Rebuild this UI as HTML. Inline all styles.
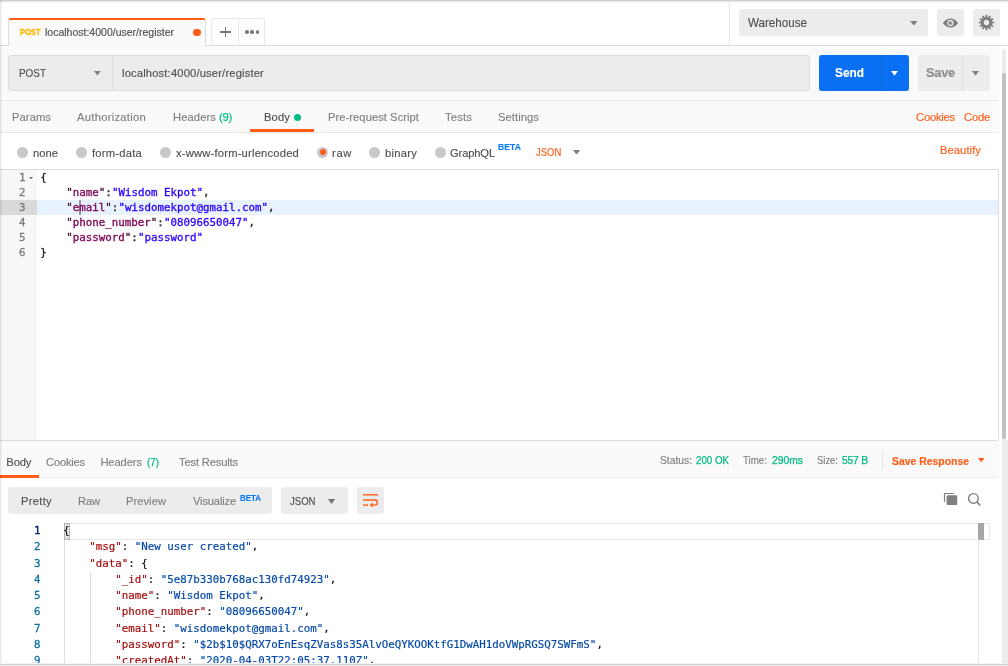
<!DOCTYPE html>
<html lang="en"><head><meta charset="utf-8"><title>Postman</title>
<style>
html,body{margin:0;padding:0;}
body{width:1008px;height:666px;position:relative;overflow:hidden;background:#fff;font-family:"Liberation Sans",sans-serif;}
#app{position:absolute;left:0;top:0;width:1008px;height:666px;will-change:transform;}
#app div,#app svg{position:absolute;box-sizing:border-box;}
.t{position:absolute;white-space:pre;line-height:20px;height:20px;-webkit-text-stroke:0.15px currentColor;}
.code{position:absolute;white-space:pre;font-family:"DejaVu Sans Mono","Liberation Mono",monospace;-webkit-text-stroke:0.3px currentColor;}
</style></head>
<body><div id="app">
<div style="left:0px;top:0px;width:1008px;height:45px;background:#fff;"></div>
<div style="left:0px;top:45px;width:1008px;height:1px;background:#dddddd;"></div>
<div style="left:0px;top:46px;width:999px;height:395px;background:#fafafa;"></div>
<div style="left:729px;top:0px;width:1px;height:45px;background:#e6e6e6;"></div>
<div style="left:8px;top:18px;width:198px;height:28px;background:#fafafa;border:1px solid #dddddd;border-top:2px solid #ff5c16;border-bottom:none;border-radius:3px 3px 0 0;"></div>
<div style="left:193px;top:28.8px;width:8.1px;height:7.3px;background:#ff5c16;border-radius:3.4px;"></div>
<div style="left:211px;top:18px;width:54px;height:27px;background:#fff;border:1px solid #e9e9e9;border-bottom:none;border-radius:3px 3px 0 0;"></div>
<div style="left:238px;top:19px;width:1px;height:26px;background:#e9e9e9;"></div>
<div style="left:220px;top:31.2px;width:10.8px;height:1.5px;background:#777;"></div>
<div style="left:224.7px;top:26.8px;width:1.5px;height:10.3px;background:#777;"></div>
<div style="left:245px;top:30.2px;width:3.6px;height:3.6px;background:#777;border-radius:50%;"></div>
<div style="left:250.3px;top:30.2px;width:3.6px;height:3.6px;background:#777;border-radius:50%;"></div>
<div style="left:255.6px;top:30.2px;width:3.6px;height:3.6px;background:#777;border-radius:50%;"></div>
<div style="left:739px;top:9px;width:189px;height:27px;background:#ececec;border-radius:3px;"></div>
<svg style="left:909.8px;top:20.75px" width="7.6" height="4.7" viewBox="0 0 7.6 4.7"><path d="M0 0h7.6L3.8 4.7z" fill="#808080"/></svg>
<div style="left:937px;top:9px;width:27px;height:27px;background:#ececec;border-radius:3px;"></div>
<div style="left:973px;top:9px;width:27px;height:27px;background:#ececec;border-radius:3px;"></div>
<svg style="left:942px;top:16px" width="17" height="13" viewBox="-8.500 -6.900 17 13"><path d="M-7.700 0C-5.200 -3.300 -2.700 -4.500 0 -4.500S5.200 -3.300 7.700 0C5.200 3.300 2.700 4.500 0 4.500S-5.200 3.300 -7.700 0z" fill="#7d7d7d"/><circle cx="-0.100" cy="0" r="3.100" fill="#ececec"/><circle cx="-0.100" cy="0" r="1.900" fill="#7d7d7d"/><path d="M0.100 -1.700v1.500h1.500a1.600 1.600 0 0 0 -1.500 -1.500z" fill="#e0e0e0"/></svg>
<svg style="left:977.900px;top:13.900px" width="17" height="17" viewBox="-8.500 -8.500 17 17"><path d="M-1.05 -5.19L-0.81 -7.66L0.81 -7.66L1.05 -5.19L1.69 -5.02L3.13 -7.04L4.53 -6.23L3.51 -3.97L3.97 -3.51L6.23 -4.53L7.04 -3.13L5.02 -1.69L5.19 -1.05L7.66 -0.81L7.66 0.81L5.19 1.05L5.02 1.69L7.04 3.13L6.23 4.53L3.97 3.51L3.51 3.97L4.53 6.23L3.13 7.04L1.69 5.02L1.05 5.19L0.81 7.66L-0.81 7.66L-1.05 5.19L-1.69 5.02L-3.13 7.04L-4.53 6.23L-3.51 3.97L-3.97 3.51L-6.23 4.53L-7.04 3.13L-5.02 1.69L-5.19 1.05L-7.66 0.81L-7.66 -0.81L-5.19 -1.05L-5.02 -1.69L-7.04 -3.13L-6.23 -4.53L-3.97 -3.51L-3.51 -3.97L-4.53 -6.23L-3.13 -7.04L-1.69 -5.02z" fill="#7d7d7d"/><circle r="5.500" fill="#7d7d7d"/><circle r="2.700" fill="#ececec"/></svg>
<div style="left:8px;top:55px;width:802px;height:36px;background:#ececec;border:1px solid #dcdcdc;border-radius:3px;"></div>
<div style="left:112px;top:56px;width:1px;height:34px;background:#dcdcdc;"></div>
<svg style="left:94.3px;top:71.1px" width="6.8" height="4.6" viewBox="0 0 6.8 4.6"><path d="M0 0h6.8L3.4 4.6z" fill="#808080"/></svg>
<div style="left:819px;top:55px;width:90px;height:36px;background:#0a70f3;border-radius:3px;"></div>
<div style="left:881px;top:55px;width:1px;height:36px;background:#0a62d4;"></div>
<svg style="left:891.1px;top:71.15px" width="7" height="4.7" viewBox="0 0 7 4.7"><path d="M0 0h7L3.5 4.7z" fill="#ffffff"/></svg>
<div style="left:918px;top:55px;width:72px;height:36px;background:#ededed;border-radius:3px;"></div>
<div style="left:962px;top:55px;width:1px;height:36px;background:#e0e0e0;"></div>
<svg style="left:972px;top:71.15px" width="7" height="4.7" viewBox="0 0 7 4.7"><path d="M0 0h7L3.5 4.7z" fill="#808080"/></svg>
<div style="left:0px;top:100px;width:999px;height:1px;background:#eaeaea;"></div>
<div style="left:0px;top:132px;width:999px;height:1px;background:#eaeaea;"></div>
<div style="left:293.5px;top:113.5px;width:7px;height:7px;background:#00bc86;border-radius:50%;"></div>
<div style="left:250px;top:129px;width:64px;height:3px;background:#ff5c16;"></div>
<div style="left:0px;top:133px;width:999px;height:36px;background:#fff;"></div>
<div style="left:16.5px;top:146.5px;width:11px;height:11px;background:#c8c8c8;border-radius:50%;"></div>
<div style="left:75.5px;top:146.5px;width:11px;height:11px;background:#c8c8c8;border-radius:50%;"></div>
<div style="left:159.5px;top:146.5px;width:11px;height:11px;background:#c8c8c8;border-radius:50%;"></div>
<div style="left:317.2px;top:146.5px;width:11px;height:11px;background:#c8c8c8;border-radius:50%;"></div>
<div style="left:319.7px;top:149px;width:6px;height:6px;background:#ff5c16;border-radius:50%;"></div>
<div style="left:368.5px;top:146.5px;width:11px;height:11px;background:#c8c8c8;border-radius:50%;"></div>
<div style="left:434.5px;top:146.5px;width:11px;height:11px;background:#c8c8c8;border-radius:50%;"></div>
<svg style="left:573.4px;top:149.5px" width="7.2" height="4.8" viewBox="0 0 7.2 4.8"><path d="M0 0h7.2L3.6 4.8z" fill="#808080"/></svg>
<div style="left:-2px;top:169px;width:1001px;height:272px;background:#fff;border:1px solid #dcdcdc;border-radius:2px;"></div>
<div style="left:0px;top:170px;width:37px;height:270px;background:#f7f7f7;"></div>
<div style="left:0px;top:200px;width:37px;height:15px;background:#dadada;"></div>
<div style="left:37px;top:200px;width:961px;height:15px;background:#e8f2ff;"></div>
<div style="left:79px;top:200px;width:2px;height:15px;background:#9a9a9a;"></div>
<span class="code" style="left:40.300px;top:170px;font-size:10.8px;line-height:15px;color:#222">{</span>
<span class="code" style="left:2px;width:23.500px;text-align:right;top:170px;font-size:10.8px;line-height:15px;color:#7a7a7a">1</span>
<span class="code" style="left:40.300px;top:185px;font-size:10.8px;line-height:15px;color:#222">    <span style="color:#3d1230">&quot;</span><span style="color:#7f0055">name</span><span style="color:#3d1230">&quot;</span>:<span style="color:#2a00ff">&quot;Wisdom Ekpot&quot;</span>,</span>
<span class="code" style="left:2px;width:23.500px;text-align:right;top:185px;font-size:10.8px;line-height:15px;color:#7a7a7a">2</span>
<span class="code" style="left:40.300px;top:200px;font-size:10.8px;line-height:15px;color:#222">    <span style="color:#3d1230">&quot;</span><span style="color:#7f0055">email</span><span style="color:#3d1230">&quot;</span>:<span style="color:#2a00ff">&quot;wisdomekpot@gmail.com&quot;</span>,</span>
<span class="code" style="left:2px;width:23.500px;text-align:right;top:200px;font-size:10.8px;line-height:15px;color:#7a7a7a">3</span>
<span class="code" style="left:40.300px;top:215px;font-size:10.8px;line-height:15px;color:#222">    <span style="color:#3d1230">&quot;</span><span style="color:#7f0055">phone_number</span><span style="color:#3d1230">&quot;</span>:<span style="color:#2a00ff">&quot;08096650047&quot;</span>,</span>
<span class="code" style="left:2px;width:23.500px;text-align:right;top:215px;font-size:10.8px;line-height:15px;color:#7a7a7a">4</span>
<span class="code" style="left:40.300px;top:230px;font-size:10.8px;line-height:15px;color:#222">    <span style="color:#3d1230">&quot;</span><span style="color:#7f0055">password</span><span style="color:#3d1230">&quot;</span>:<span style="color:#2a00ff">&quot;password&quot;</span></span>
<span class="code" style="left:2px;width:23.500px;text-align:right;top:230px;font-size:10.8px;line-height:15px;color:#7a7a7a">5</span>
<span class="code" style="left:40.300px;top:245px;font-size:10.8px;line-height:15px;color:#222">}</span>
<span class="code" style="left:2px;width:23.500px;text-align:right;top:245px;font-size:10.8px;line-height:15px;color:#7a7a7a">6</span>
<svg style="left:29.4px;top:176.6px" width="4" height="2.6" viewBox="0 0 4 2.6"><path d="M0 0h4L2 2.6z" fill="#777777"/></svg>
<div style="left:0px;top:441px;width:999px;height:36px;background:#fafafa;"></div>
<div style="left:0px;top:477px;width:999px;height:1px;background:#ececec;"></div>
<div style="left:0px;top:475px;width:39px;height:3px;background:#ff5c16;"></div>
<div style="left:882px;top:451px;width:1px;height:18px;background:#e4e4e4;"></div>
<svg style="left:977.7px;top:458.2px" width="6.6" height="4.2" viewBox="0 0 6.6 4.2"><path d="M0 0h6.6L3.3 4.2z" fill="#ff5c16"/></svg>
<div style="left:8px;top:487px;width:264px;height:27px;background:#ececec;border-radius:3px;"></div>
<div style="left:281px;top:487px;width:67px;height:27px;background:#ececec;border-radius:3px;"></div>
<svg style="left:328px;top:499.05px" width="7.2" height="4.9" viewBox="0 0 7.2 4.9"><path d="M0 0h7.2L3.6 4.9z" fill="#757575"/></svg>
<div style="left:357px;top:487px;width:27px;height:27px;background:#ececec;border-radius:3px;"></div>
<svg style="left:361px;top:492px" width="19" height="17" viewBox="0 0 19 17"><g fill="none" stroke="#ff5c16" stroke-width="1.400" stroke-linecap="butt" stroke-linejoin="round"><path d="M2 2.800h15"/><path d="M2 8h11.800a2.550 2.550 0 0 1 0 5.100H10.500"/><path d="M2 13.100h5"/></g><path d="M11.600 10.600l-3 2.500 3 2.500z" fill="#ff5c16"/></svg>
<svg style="left:943px;top:492px" width="16" height="14" viewBox="0 0 16 14"><path d="M1.500 10V1.500H11" fill="none" stroke="#808080" stroke-width="1.200"/><rect x="3.600" y="3.200" width="10.600" height="9.800" rx="1" fill="#808080"/></svg>
<svg style="left:966px;top:491px" width="16" height="16" viewBox="0 0 16 16"><circle cx="7.400" cy="7.400" r="4.800" fill="none" stroke="#808080" stroke-width="1.400"/><path d="M10.900 10.900l3 3.100" stroke="#808080" stroke-width="1.600" stroke-linecap="round"/></svg>
<div style="left:64px;top:523px;width:926px;height:16.5px;background:#fff;border:1px solid #e8e8e8;"></div>
<div style="left:977.5px;top:523px;width:6px;height:16.5px;background:#a6a6a6;"></div>
<div style="left:977.5px;top:539px;width:1px;height:127px;background:#e4e4e4;"></div>
<div style="left:64px;top:539.5px;width:1px;height:127px;background:#dedede;"></div>
<div style="left:90px;top:572px;width:1px;height:95px;background:#dedede;"></div>
<div style="left:64px;top:523px;width:5.8px;height:16.5px;background:#e4e4e4;border:1px solid #b4b4b4;"></div>
<span class="code" style="left:63.300px;top:523px;font-size:10.8px;line-height:16.25px;color:#111;-webkit-text-stroke-width:0.18px">{</span>
<span class="code" style="left:10px;width:30.500px;text-align:right;top:523px;font-size:10.8px;line-height:16.25px;color:#0b216f">1</span>
<span class="code" style="left:63.300px;top:539.25px;font-size:10.8px;line-height:16.25px;color:#111;-webkit-text-stroke-width:0.18px">    <span style="color:#a40d0d">&quot;msg&quot;</span>: <span style="color:#0449a8">&quot;New user created&quot;</span>,</span>
<span class="code" style="left:10px;width:30.500px;text-align:right;top:539.25px;font-size:10.8px;line-height:16.25px;color:#0f6f9f">2</span>
<span class="code" style="left:63.300px;top:555.5px;font-size:10.8px;line-height:16.25px;color:#111;-webkit-text-stroke-width:0.18px">    <span style="color:#a40d0d">&quot;data&quot;</span>: {</span>
<span class="code" style="left:10px;width:30.500px;text-align:right;top:555.5px;font-size:10.8px;line-height:16.25px;color:#0f6f9f">3</span>
<span class="code" style="left:63.300px;top:571.75px;font-size:10.8px;line-height:16.25px;color:#111;-webkit-text-stroke-width:0.18px">        <span style="color:#a40d0d">&quot;_id&quot;</span>: <span style="color:#0449a8">&quot;5e87b330b768ac130fd74923&quot;</span>,</span>
<span class="code" style="left:10px;width:30.500px;text-align:right;top:571.75px;font-size:10.8px;line-height:16.25px;color:#0f6f9f">4</span>
<span class="code" style="left:63.300px;top:588px;font-size:10.8px;line-height:16.25px;color:#111;-webkit-text-stroke-width:0.18px">        <span style="color:#a40d0d">&quot;name&quot;</span>: <span style="color:#0449a8">&quot;Wisdom Ekpot&quot;</span>,</span>
<span class="code" style="left:10px;width:30.500px;text-align:right;top:588px;font-size:10.8px;line-height:16.25px;color:#0f6f9f">5</span>
<span class="code" style="left:63.300px;top:604.25px;font-size:10.8px;line-height:16.25px;color:#111;-webkit-text-stroke-width:0.18px">        <span style="color:#a40d0d">&quot;phone_number&quot;</span>: <span style="color:#0449a8">&quot;08096650047&quot;</span>,</span>
<span class="code" style="left:10px;width:30.500px;text-align:right;top:604.25px;font-size:10.8px;line-height:16.25px;color:#0f6f9f">6</span>
<span class="code" style="left:63.300px;top:620.5px;font-size:10.8px;line-height:16.25px;color:#111;-webkit-text-stroke-width:0.18px">        <span style="color:#a40d0d">&quot;email&quot;</span>: <span style="color:#0449a8">&quot;wisdomekpot@gmail.com&quot;</span>,</span>
<span class="code" style="left:10px;width:30.500px;text-align:right;top:620.5px;font-size:10.8px;line-height:16.25px;color:#0f6f9f">7</span>
<span class="code" style="left:63.300px;top:636.75px;font-size:10.8px;line-height:16.25px;color:#111;-webkit-text-stroke-width:0.18px">        <span style="color:#a40d0d">&quot;password&quot;</span>: <span style="color:#0449a8">&quot;$2b$10$QRX7oEnEsqZVas8s35AlvOeQYKOOKtfG1DwAH1doVWpRGSQ7SWFmS&quot;</span>,</span>
<span class="code" style="left:10px;width:30.500px;text-align:right;top:636.75px;font-size:10.8px;line-height:16.25px;color:#0f6f9f">8</span>
<span class="code" style="left:63.300px;top:653px;font-size:10.8px;line-height:16.25px;color:#111;-webkit-text-stroke-width:0.18px">        <span style="color:#a40d0d">&quot;createdAt&quot;</span>: <span style="color:#0449a8">&quot;2020-04-03T22:05:37.110Z&quot;</span>,</span>
<span class="code" style="left:10px;width:30.500px;text-align:right;top:653px;font-size:10.8px;line-height:16.25px;color:#0f6f9f">9</span>
<div style="left:1002px;top:49px;width:4px;height:392px;background:#ececec;border-radius:2px 2px 0 0;"></div>
<div style="left:1002px;top:73px;width:4px;height:366px;background:#c1c1c1;border-radius:2px;"></div>
<div style="left:1002px;top:440px;width:6px;height:226px;background:#ebebeb;"></div>
<div style="left:0px;top:0px;width:1008px;height:3px;background:transparent;background:linear-gradient(#c4c4c4,#e8e8e8 50%,#fff);"></div>
<div style="left:0px;top:0px;width:3px;height:666px;background:transparent;background:linear-gradient(90deg,rgba(0,0,0,0.13),rgba(0,0,0,0.04) 45%,rgba(0,0,0,0));"></div>
<div style="left:0px;top:663px;width:1008px;height:1px;background:#f4f4f4;"></div>
<div style="left:0px;top:664px;width:1008px;height:1px;background:#d0d0d0;"></div>
<div style="left:0px;top:665px;width:1008px;height:1px;background:#ececec;"></div>
<span class="t" style="left:20px;top:22.4px;font-size:9.8px;color:#ffb400;font-weight:700;transform:scaleX(0.7681);transform-origin:0 50%;-webkit-text-stroke:0.35px #ffb400;">POST</span>
<span class="t" style="left:45px;top:22px;font-size:10.5px;color:#505050;letter-spacing:0.000px;">localhost:4000/user/register</span>
<span class="t" style="left:748px;top:12.5px;font-size:12.1px;color:#505050;transform:scaleX(0.9608);transform-origin:0 50%;">Warehouse</span>
<span class="t" style="left:19px;top:63px;font-size:11.2px;color:#505050;transform:scaleX(0.8862);transform-origin:0 50%;">POST</span>
<span class="t" style="left:122px;top:63px;font-size:11.2px;color:#505050;letter-spacing:0.163px;">localhost:4000/user/register</span>
<span class="t" style="left:835px;top:62.5px;font-size:13.1px;color:#fff;font-weight:700;transform:scaleX(0.9058);transform-origin:0 50%;">Send</span>
<span class="t" style="left:926px;top:62.5px;font-size:12.8px;color:#8e8e8e;font-weight:700;letter-spacing:-0.223px;">Save</span>
<span class="t" style="left:12px;top:107px;font-size:11.2px;color:#808080;letter-spacing:0.076px;">Params</span>
<span class="t" style="left:77px;top:107px;font-size:11.2px;color:#808080;letter-spacing:0.284px;">Authorization</span>
<span class="t" style="left:173px;top:107px;font-size:11.2px;color:#808080;letter-spacing:0.100px;">Headers</span>
<span class="t" style="left:219px;top:107px;font-size:11.2px;color:#00bc86;letter-spacing:-0.229px;-webkit-text-stroke:0.25px;">(9)</span>
<span class="t" style="left:264px;top:107px;font-size:11.2px;color:#505050;letter-spacing:0.125px;">Body</span>
<span class="t" style="left:328px;top:107px;font-size:11.2px;color:#808080;letter-spacing:0.047px;">Pre-request Script</span>
<span class="t" style="left:445px;top:107px;font-size:11.2px;color:#808080;letter-spacing:0.175px;">Tests</span>
<span class="t" style="left:498px;top:107px;font-size:11.2px;color:#808080;letter-spacing:0.070px;">Settings</span>
<span class="t" style="left:916px;top:107px;font-size:11.2px;color:#ff5c16;letter-spacing:-0.203px;">Cookies</span>
<span class="t" style="left:964px;top:107px;font-size:11.2px;color:#ff5c16;letter-spacing:-0.188px;">Code</span>
<span class="t" style="left:33px;top:142.5px;font-size:11.2px;color:#505050;letter-spacing:0.027px;">none</span>
<span class="t" style="left:92px;top:142.5px;font-size:11.2px;color:#505050;letter-spacing:0.236px;">form-data</span>
<span class="t" style="left:176px;top:142.5px;font-size:11.2px;color:#505050;letter-spacing:0.202px;">x-www-form-urlencoded</span>
<span class="t" style="left:332px;top:142.5px;font-size:11.2px;color:#505050;letter-spacing:0.656px;">raw</span>
<span class="t" style="left:385px;top:142.5px;font-size:11.2px;color:#505050;letter-spacing:0.253px;">binary</span>
<span class="t" style="left:450px;top:142.5px;font-size:11.2px;color:#505050;letter-spacing:-0.147px;">GraphQL</span>
<span class="t" style="left:498px;top:137.2px;font-size:8.5px;color:#0b7af5;font-weight:700;letter-spacing:0.121px;">BETA</span>
<span class="t" style="left:535.5px;top:141.9px;font-size:10.8px;color:#ff5c16;transform:scaleX(0.8751);transform-origin:0 50%;">JSON</span>
<span class="t" style="left:940px;top:139.6px;font-size:11.2px;color:#ff5c16;letter-spacing:0.070px;">Beautify</span>
<span class="t" style="left:6.3px;top:452px;font-size:11.2px;color:#505050;letter-spacing:-0.125px;">Body</span>
<span class="t" style="left:46px;top:452px;font-size:11.2px;color:#808080;letter-spacing:-0.203px;">Cookies</span>
<span class="t" style="left:100.4px;top:452px;font-size:11.2px;color:#808080;letter-spacing:-0.100px;">Headers</span>
<span class="t" style="left:147px;top:452px;font-size:11.2px;color:#00bc86;transform:scaleX(0.8767);transform-origin:0 50%;-webkit-text-stroke:0.25px;">(7)</span>
<span class="t" style="left:179px;top:452px;font-size:11.2px;color:#808080;letter-spacing:-0.161px;">Test Results</span>
<span class="t" style="left:660px;top:450.5px;font-size:10.3px;color:#808080;letter-spacing:-0.009px;">Status:</span>
<span class="t" style="left:696px;top:450.5px;font-size:10.3px;color:#00bc86;transform:scaleX(0.9450);transform-origin:0 50%;-webkit-text-stroke:0.25px;">200 OK</span>
<span class="t" style="left:743px;top:450.5px;font-size:10.3px;color:#808080;transform:scaleX(0.9458);transform-origin:0 50%;">Time:</span>
<span class="t" style="left:772px;top:450.5px;font-size:10.3px;color:#00bc86;letter-spacing:0.019px;-webkit-text-stroke:0.25px;">290ms</span>
<span class="t" style="left:817px;top:450.5px;font-size:10.3px;color:#808080;transform:scaleX(0.9168);transform-origin:0 50%;">Size:</span>
<span class="t" style="left:842px;top:450.5px;font-size:10.3px;color:#00bc86;letter-spacing:-0.184px;-webkit-text-stroke:0.25px;">557 B</span>
<span class="t" style="left:892px;top:450.5px;font-size:11.2px;color:#ff5c16;font-weight:700;transform:scaleX(0.9309);transform-origin:0 50%;">Save Response</span>
<span class="t" style="left:21px;top:491px;font-size:11.2px;color:#505050;letter-spacing:0.294px;">Pretty</span>
<span class="t" style="left:78px;top:491px;font-size:11.2px;color:#808080;letter-spacing:-0.130px;">Raw</span>
<span class="t" style="left:126px;top:491px;font-size:11.2px;color:#808080;letter-spacing:0.029px;">Preview</span>
<span class="t" style="left:193px;top:491px;font-size:11.2px;color:#808080;letter-spacing:-0.175px;">Visualize</span>
<span class="t" style="left:240px;top:487.7px;font-size:8.5px;color:#0b7af5;font-weight:700;transform:scaleX(0.9327);transform-origin:0 50%;">BETA</span>
<span class="t" style="left:289.5px;top:491px;font-size:10.8px;color:#505050;transform:scaleX(0.8855);transform-origin:0 50%;">JSON</span>
</div></body></html>
